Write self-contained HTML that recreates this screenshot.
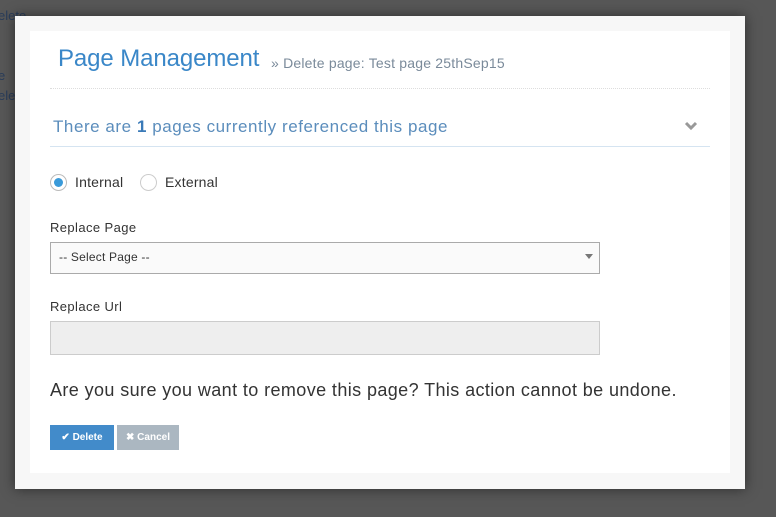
<!DOCTYPE html>
<html><head><style>
body{margin:0;width:776px;height:517px;background:#575757;position:relative;overflow:hidden;font-family:"Liberation Sans",sans-serif}
.bgtxt{position:absolute;color:#2a3d5a;font-size:13px}
.outer{position:absolute;left:15px;top:16px;width:730px;height:473px;background:#f7f7f7;box-shadow:0 0 12px rgba(0,0,0,.5)}
.inner{position:absolute;left:15px;top:15px;width:700px;height:442px;background:#fff}
.abs{position:absolute}
</style></head><body>
<div class="bgtxt" style="left:-2px;top:8px">elete</div>
<div class="bgtxt" style="left:-2px;top:68px">e</div>
<div class="bgtxt" style="left:-2px;top:88px">ele</div>
<div class="outer"><div class="inner">
<div class="abs" style="left:28px;top:14px;font-size:24px;color:#3a87c8;letter-spacing:-0.1px">Page Management</div>
<div class="abs" style="left:241px;top:24px;font-size:14px;color:#7a8a9a;letter-spacing:0.2px">» Delete page: Test page 25thSep15</div>
<div class="abs" style="left:20px;top:57px;width:660px;border-top:1px dotted #ddd"></div>
<div class="abs" style="left:23px;top:86px;font-size:17px;color:#5b8dbc;letter-spacing:0.55px">There are <b style="color:#3a7ab8">1</b> pages currently referenced this page</div>
<svg class="abs" style="left:654px;top:90px" width="14" height="10"><path d="M2 2L7 7L12 2" stroke="#999" stroke-width="3" fill="none"/></svg>
<div class="abs" style="left:20px;top:115px;width:660px;border-top:1px solid #d5e4f1"></div>
<div class="abs" style="left:20px;top:143px;width:15px;height:15px;border:1px solid #bbb;border-radius:50%"></div>
<div class="abs" style="left:24px;top:147px;width:9px;height:9px;background:#3a9ad9;border-radius:50%"></div>
<div class="abs" style="left:45px;top:143px;font-size:14px;color:#333;letter-spacing:0.2px">Internal</div>
<div class="abs" style="left:110px;top:143px;width:15px;height:15px;border:1px solid #ccc;border-radius:50%"></div>
<div class="abs" style="left:135px;top:143px;font-size:14px;color:#333;letter-spacing:0.2px">External</div>
<div class="abs" style="left:20px;top:189px;font-size:13px;color:#333;letter-spacing:0.4px">Replace Page</div>
<div class="abs" style="left:20px;top:211px;width:548px;height:30px;border:1px solid #aaa;background:#fafafa"></div>
<div class="abs" style="left:29px;top:219px;font-size:12px;color:#333;letter-spacing:0.2px">-- Select Page --</div>
<div class="abs" style="left:555px;top:223px;border:4px solid transparent;border-top:5px solid #777"></div>
<div class="abs" style="left:20px;top:268px;font-size:13px;color:#333;letter-spacing:0.4px">Replace Url</div>
<div class="abs" style="left:20px;top:290px;width:548px;height:32px;border:1px solid #ccc;background:#eee"></div>
<div class="abs" style="left:20px;top:349px;font-size:18px;color:#333;letter-spacing:0.4px">Are you sure you want to remove this page? This action cannot be undone.</div>
<div class="abs" style="left:20px;top:394px;width:64px;height:25px;background:#428bca;color:#fff;font-size:10px;font-weight:bold;line-height:25px;text-align:center">✔ Delete</div>
<div class="abs" style="left:87px;top:394px;width:62px;height:25px;background:#abb7c1;color:#fff;font-size:10px;font-weight:bold;line-height:25px;text-align:center">✖ Cancel</div>
</div></div>
</body></html>
